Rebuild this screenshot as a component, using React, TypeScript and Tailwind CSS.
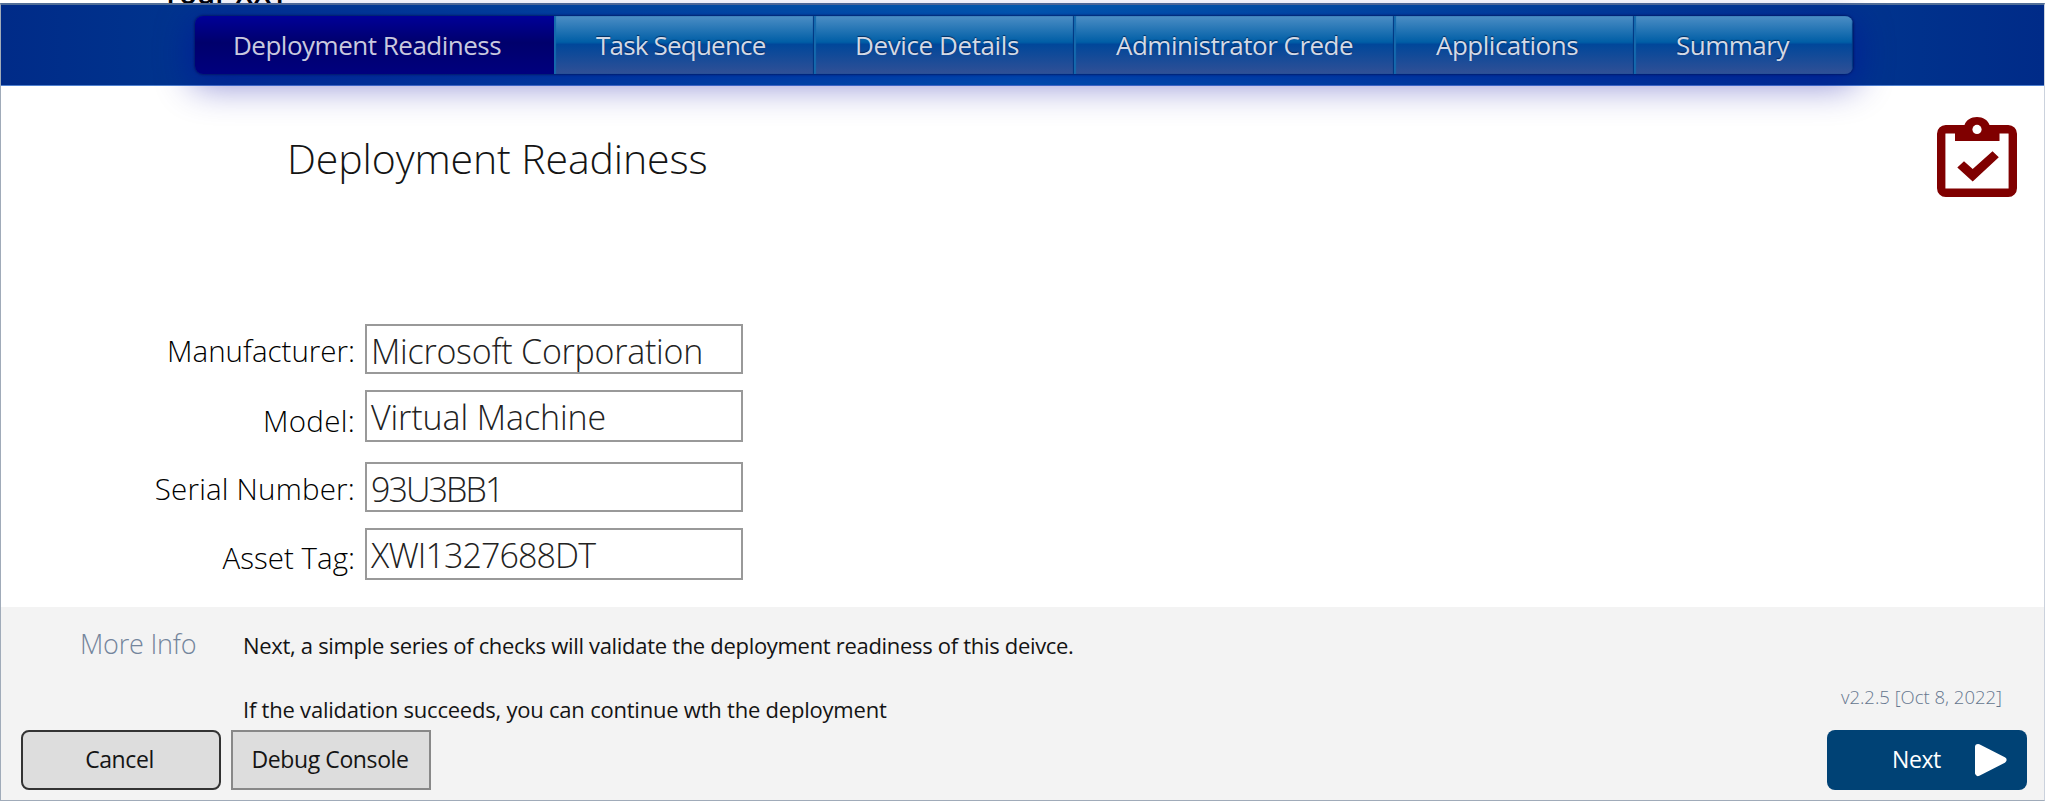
import React from "react";

const tabs = [
  { label: "Deployment Readiness", cls: "w-[359px] pl-[38px] tracking-[-0.5px]" },
  { label: "Task Sequence", cls: "w-[260px] pl-[42px] tracking-[-0.8px]" },
  { label: "Device Details", cls: "w-[260px] pl-[41px] tracking-[-0.4px]" },
  { label: "Administrator Crede", cls: "w-[320px] pl-[42px] tracking-[-0.5px]" },
  { label: "Applications", cls: "w-[240px] pl-[42px] tracking-[-0.5px]" },
  { label: "Summary", cls: "w-[219px] pl-[42px] tracking-[-0.5px]" },
];

const fields = [
  { label: "Manufacturer:", value: "Microsoft Corporation", row: "mb-[16px]", box: "h-[50px] pt-[3px] tracking-[-0.25px]", lab: "h-[50px] pt-[3px]" },
  { label: "Model:", value: "Virtual Machine", row: "mb-[20px]", box: "h-[52px] pt-[2px] tracking-[-0.1px]", lab: "h-[52px] pt-[7px] tracking-[0.3px]" },
  { label: "Serial Number:", value: "93U3BB1", row: "mb-[16px]", box: "h-[50px] pt-[3px] tracking-[-1.9px]", lab: "h-[50px] pt-[3px] tracking-[0.2px]" },
  { label: "Asset Tag:", value: "XWI1327688DT", row: "", box: "h-[52px] pt-[2px] tracking-[-0.9px]", lab: "h-[48px] overflow-hidden pt-[6px]" },
];

function ClipboardIcon() {
  return (
    <svg className="h-[82px] w-[82px]" viewBox="0 0 82 82" fill="none">
      <rect x="5.2" y="13.2" width="71.6" height="63.6" rx="4.5" stroke="#800000" strokeWidth="8.4" />
      <path fill="#800000" d="M19 9H28.500C30 4 35 1 41 1S52 4 53.500 9H63.500V25H19Z" />
      <circle cx="41" cy="13.400" r="4.600" fill="#fff" />
      <path fill="#800000" d="M21.300 51.500L28 45.300L36.700 53L56.500 35.300L62.800 41.300L36.700 65.500Z" />
    </svg>
  );
}

export default function App() {
  return (
    <div className="flex h-[801px] w-[2045px] flex-col overflow-hidden bg-white font-['Open_Sans','Noto_Sans',sans-serif] text-[#141414]">
      <div className="flex h-[3px] shrink-0 items-end overflow-hidden pl-[162px]">
        <span className="-mb-[10px] text-[29px] leading-[40px] font-semibold whitespace-pre text-black">Your XXT</span>
      </div>

      <div className="flex min-h-0 flex-1 flex-col border border-t-2 border-[#a0abb9] border-t-[#526f98] border-r-[#cbd2dd]">
        <header className="flex h-[81px] shrink-0 items-start border-b border-[#4f80cf] bg-[linear-gradient(90deg,#002b88_0%,#003c93_17%,#0061b0_50%,#003c93_83%,#002b88_100%)] pt-[11px] pl-[194px]">
          <nav className="flex h-[58px] overflow-hidden rounded-[8px] shadow-[0_0_2px_1px_rgba(0,20,90,0.7),0_8px_36px_4px_rgba(0,0,160,0.45)]">
            {tabs.map((t, i) => (
              <div
                key={t.label}
                className={`${t.cls} flex shrink-0 items-center text-[26px] leading-[36px] whitespace-nowrap ${
                  i === 0
                    ? "bg-[linear-gradient(180deg,#000098_0%,#00006c_46%,#00007e_100%)] text-[#c9c9df]"
                    : "bg-[linear-gradient(180deg,#4c8ec5_0%,#005ea6_45%,#00479a_49%,#315096_100%)] text-[#d3d9e6] shadow-[inset_2px_0_1px_#146aad,inset_-1px_0_1px_#003580] [text-shadow:0_-1px_1px_rgba(0,20,60,0.7)]"
                }`}
              >
                {t.label}
              </div>
            ))}
          </nav>
        </header>

        <main className="flex h-[521px] shrink-0 items-start justify-between pr-[26px]">
          <div className="pt-[42px]">
            <h1 className="pl-[286px] text-[41px] leading-[60px] font-light tracking-[-0.1px]">Deployment Readiness</h1>
            <div className="pt-[136px]">
              {fields.map((f) => (
                <div key={f.label} className={`${f.row} flex items-start`}>
                  <div className={`${f.lab} w-[354px] shrink-0 text-right text-[29.5px] leading-[48px] font-light whitespace-nowrap text-black`}>
                    {f.label}
                  </div>
                  <div className={`${f.box} ml-[10px] flex w-[378px] items-center border-2 border-[#999] pl-[4px] text-[34px] leading-[44px] font-light whitespace-nowrap text-[#222]`}>
                    {f.value}
                  </div>
                </div>
              ))}
            </div>
          </div>
          <div className="pt-[30px]">
            <ClipboardIcon />
          </div>
        </main>

        <footer className="flex min-h-0 flex-1 flex-col bg-[#f3f3f3]">
          <div className="flex h-[123px] shrink-0 items-start pr-[42px] pl-[79px]">
            <div className="w-[163px] pt-[19px] text-[27px] leading-[36px] font-light tracking-[-0.2px] text-[#74859c]">More Info</div>
            <div className="flex-1 pt-[22px] text-[22px] leading-[32px]">
              <p className="tracking-[-0.31px]">Next, a simple series of checks will validate the deployment readiness of this deivce.</p>
              <p className="pt-[32px] tracking-[-0.22px]">If the validation succeeds, you can continue wth the deployment</p>
            </div>
            <div className="self-end pb-[21px] text-[18.5px] leading-[24px] font-light text-[#65768e]">v2.2.5 [Oct 8, 2022]</div>
          </div>
          <div className="flex items-start pr-[17px] pl-[20px] text-[23px] leading-[32px] tracking-[-0.4px]">
            <button className="h-[60px] w-[200px] rounded-[8px] border-2 border-[#333] bg-[#ddd] pr-[3px] pb-[2px]">Cancel</button>
            <button className="ml-[10px] h-[60px] w-[200px] border-2 border-[#888] bg-[#ddd] pr-[2px] pb-[2px]">Debug Console</button>
            <button className="ml-auto flex h-[60px] w-[200px] items-center rounded-[8px] bg-[#004275] pl-[65px] text-white">
              <span className="w-[82px] pb-[2px] text-left">Next</span>
              <svg className="h-[34px] w-[34px]" viewBox="0 0 34 34">
                <path d="M4 4L29.500 17L4 30Z" fill="#fff" stroke="#fff" strokeWidth="6" strokeLinejoin="round" />
              </svg>
            </button>
          </div>
        </footer>
      </div>
    </div>
  );
}
